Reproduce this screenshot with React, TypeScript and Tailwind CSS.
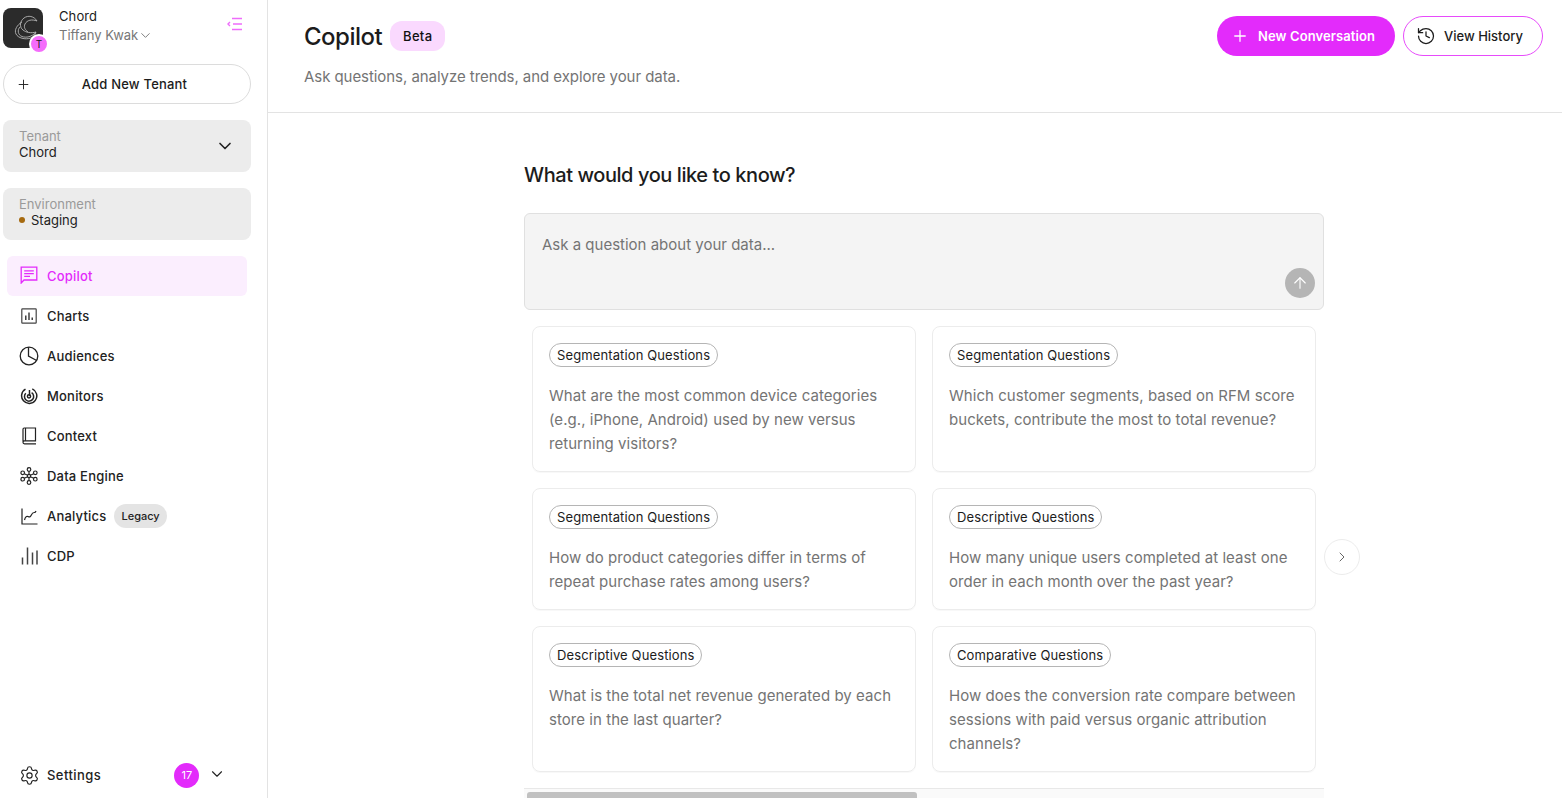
import React from 'react';
import { ChevronDown, ChevronRight, History, Plus, ArrowUp, Settings } from 'lucide-react';

function CopilotIcon() {
  return (
    <svg width="18" height="18" viewBox="0 0 18 18" fill="none" stroke="currentColor" strokeWidth="1.3" className="-mt-[2px]">
      <path d="M1.2 17V1.2h15.600v12.800H4L1.200 17z" />
      <path d="M4.200 4.800h9.600M4.200 7.600h9.600M4.200 10.400h5.800" />
    </svg>
  );
}

function ChartsIcon() {
  return (
    <svg width="16" height="16" viewBox="0 0 16 16" fill="none" stroke="currentColor" strokeWidth="1.2" className="-mt-[1px]">
      <rect x="0.8" y="0.8" width="14.4" height="14.400" rx="0.6" stroke="#444" />
      <path d="M4.800 12V7.500M8 12V4.500M11.200 12V9.500" strokeWidth="1.300" />
    </svg>
  );
}

function AudiencesIcon() {
  return (
    <svg width="20" height="20" viewBox="0 0 20 20" fill="none" stroke="currentColor" strokeWidth="1.3">
      <circle cx="10" cy="10" r="8.800" />
      <path d="M9.500 1.300V10l7.700 4.200" />
    </svg>
  );
}

function MonitorsIcon() {
  return (
    <svg width="18" height="18" viewBox="0 0 18 18" fill="none" stroke="currentColor" strokeWidth="1.500">
      <path d="M5.500 2.200a7.600 7.600 0 1 0 6.800-.3" />
      <path d="M5.800 6.300a4.600 4.600 0 1 0 5.800-.6" />
      <path d="M9.500 3v6" />
      <circle cx="9" cy="9.300" r="1.600" />
    </svg>
  );
}

function ContextIcon() {
  return (
    <svg width="15" height="18" viewBox="0 0 15 18" fill="none" stroke="currentColor" strokeWidth="1.200">
      <path d="M1 14.500V2.200C1 1.500 1.500 1 2.200 1H13.500v12.800H2.500C1.600 13.800 1 14.500 1 15.300S1.600 16.800 2.500 16.800H14" />
      <path d="M3.500 1v12.800" />
    </svg>
  );
}

function DataEngineIcon() {
  return (
    <svg width="18" height="18" viewBox="0 0 18 18" fill="none" stroke="currentColor" strokeWidth="1.200">
      <circle cx="9" cy="2.500" r="1.800" />
      <circle cx="9" cy="15.500" r="1.800" />
      <circle cx="2.700" cy="5.800" r="1.800" />
      <circle cx="15.300" cy="5.800" r="1.800" />
      <circle cx="2.700" cy="12.200" r="1.800" />
      <circle cx="15.300" cy="12.200" r="1.800" />
      <circle cx="9" cy="9" r="1.600" />
      <path d="M9 4.300v3.100M9 10.600v3.100M4.300 6.700l3.300 1.500M13.700 6.700l-3.300 1.500M4.300 11.300l3.300-1.500M13.700 11.300l-3.300-1.500" />
    </svg>
  );
}

function AnalyticsIcon() {
  return (
    <svg width="17" height="17" viewBox="0 0 17 17" fill="none" stroke="currentColor" strokeWidth="1.200">
      <path d="M1 0.500v15.500h15.500" />
      <path d="M3.500 12c.8-2.800 2-4.300 3.500-3.500s2.400.6 3.200-1.200 1.800-3 3.300-2.800c.7 0 1.100-.5 1.500-1.500" />
    </svg>
  );
}

function CdpIcon() {
  return (
    <svg width="17" height="18" viewBox="0 0 17 18" fill="none" stroke="#444" strokeWidth="1.500">
      <path d="M1.500 17.500v-7M6.500 17.500V0.500M11.500 17.500V5.500M16 17.500V3.500" />
    </svg>
  );
}

function CollapseIcon() {
  return (
    <svg width="16" height="14" viewBox="0 0 16 14" fill="none" stroke="#ee6cfb" strokeWidth="1.400" className="mb-[8px]">
      <path d="M5 1.500h10M6 7h9M5 12.500h10" />
      <path d="M3 5L1 7l2 2" />
    </svg>
  );
}

function ChordLogo() {
  return (
    <div className="relative w-10 h-10 shrink-0">
      <div className="w-10 h-10 rounded-lg bg-[#2b2b2b]">
        <svg width="40" height="40" viewBox="0 0 40 40" fill="none" stroke="#b4b4b4" strokeWidth="0.900">
          <path d="M34 13C31 8 25 7 21 10C17 13 16 19 20 22C23 24.500 28 25.500 33 24" />
          <path d="M34 13C29 11 24 12 22 16C20.500 19 22 22 25 24" />
          <path d="M19 14C14 17 11 22 13 26C15 30 22 32 28 30C30 29 32 27 33 24" />
          <path d="M17 19C14 22 15 27 19 28.500C23 30 29 29 33 24" />
        </svg>
      </div>
      <div className="absolute -right-[6px] -bottom-[6px] w-[20px] h-[20px] rounded-full bg-[#f46cfb] border-2 border-white flex items-center justify-center text-[10px] text-[#222]">
        T
      </div>
    </div>
  );
}

const navItems = [
  { label: 'Copilot', icon: <CopilotIcon />, active: true },
  { label: 'Charts', icon: <ChartsIcon /> },
  { label: 'Audiences', icon: <AudiencesIcon /> },
  { label: 'Monitors', icon: <MonitorsIcon /> },
  { label: 'Context', icon: <ContextIcon /> },
  { label: 'Data Engine', icon: <DataEngineIcon /> },
  { label: 'Analytics', icon: <AnalyticsIcon />, badge: 'Legacy' },
  { label: 'CDP', icon: <CdpIcon /> },
];

function Sidebar() {
  return (
    <aside className="w-[268px] shrink-0 h-full border-r border-[#e3e3e3] flex flex-col">
      <div className="flex items-center pl-[3px] pr-[24px] pt-[8px] h-[48px]">
        <ChordLogo />
        <div className="ml-[16px] mb-[4px] flex-1 leading-[19px]">
          <div className="text-[13px] text-[#1c1c1c] tracking-[0.1px]">Chord</div>
          <div className="flex items-center text-[13px] text-[#777]">
            Tiffany Kwak
            <ChevronDown size={15} strokeWidth={1.500} />
          </div>
        </div>
        <CollapseIcon />
      </div>

      <div className="mx-[3px] w-[248px] mt-[16px] h-[40px] rounded-full border border-[#dcdcdc] flex items-center relative">
        <Plus size={15} className="ml-[12px] text-[#222]" strokeWidth={1.500} />
        <span className="flex-1 text-center text-[13px] font-medium text-[#1c1c1c] pr-[18px] pl-[6px] pt-[2px] tracking-[0.2px]">Add New Tenant</span>
      </div>

      <div className="mx-[3px] w-[248px] mt-[16px] h-[52px] rounded-lg bg-[#ececec] flex items-center pl-[16px] pr-[16px]">
        <div className="flex-1 text-[13px] leading-[16px] pb-[4px]">
          <div className="text-[#9a9a9a]">Tenant</div>
          <div className="text-[#222]">Chord</div>
        </div>
        <ChevronDown size={20} className="text-[#222]" strokeWidth={2} />
      </div>

      <div className="mx-[3px] w-[248px] mt-[16px] h-[52px] rounded-lg bg-[#ececec] flex items-center pl-[16px]">
        <div className="text-[13px] leading-[16px] pb-[4px]">
          <div className="text-[#9a9a9a]">Environment</div>
          <div className="flex items-center text-[#222]">
            <span className="w-[6px] h-[6px] rounded-full bg-[#a66a10] mr-[6px]" />
            Staging
          </div>
        </div>
      </div>

      <nav className="mt-[16px] ml-[7px] w-[240px] flex flex-col">
        {navItems.map((item) => (
          <div
            key={item.label}
            className={
              item.active
                ? 'h-[40px] rounded-md bg-[#fbeefe] text-[#e32bfb] flex items-center'
                : 'h-[40px] text-[#222] flex items-center'
            }
          >
            <span className="w-[40px] pl-[12px] flex justify-start items-center">
              <span className="w-[20px] flex justify-center">{item.icon}</span>
            </span>
            <span className="text-[13px] font-medium tracking-[0.2px] pt-[2px]">{item.label}</span>
            {item.badge && (
              <span className="ml-[8px] h-[24px] px-[7px] rounded-full bg-[#e4e4e4] text-[11px] font-medium flex items-center">
                {item.badge}
              </span>
            )}
          </div>
        ))}
      </nav>

      <div className="mt-auto h-[46px] ml-[19px] flex items-center text-[#222]">
        <Settings size={21} strokeWidth={1.300} />
        <span className="ml-[7px] pt-[2px] text-[13px] font-medium tracking-[0.45px]">Settings</span>
        <span className="ml-[73px] w-[25px] h-[25px] rounded-full bg-[#e32bfb] text-white text-[11px] flex items-center justify-center">17</span>
        <ChevronDown size={18} className="ml-[9px] mb-[2px]" strokeWidth={1.500} />
      </div>
    </aside>
  );
}

const cards = [
  [
    { tag: 'Segmentation Questions', text: 'What are the most common device categories (e.g., iPhone, Android) used by new versus returning visitors?' },
    { tag: 'Segmentation Questions', text: 'Which customer segments, based on RFM score buckets, contribute the most to total revenue?' },
  ],
  [
    { tag: 'Segmentation Questions', text: 'How do product categories differ in terms of repeat purchase rates among users?' },
    { tag: 'Descriptive Questions', text: 'How many unique users completed at least one order in each month over the past year?' },
  ],
  [
    { tag: 'Descriptive Questions', text: 'What is the total net revenue generated by each store in the last quarter?' },
    { tag: 'Comparative Questions', text: 'How does the conversion rate compare between sessions with paid versus organic attribution channels?' },
  ],
];

function QuestionCard({ tag, text }: { tag: string; text: string }) {
  return (
    <div className="rounded-lg border border-[#ececec] pt-[16px] pb-[15px] px-[16px] shadow-[0_1px_1px_rgba(0,0,0,0.03)]">
      <span className="flex w-fit items-center h-[24px] pt-[1px] px-[7px] rounded-full border border-[#b5b5b5] text-[13px] tracking-[0.12px] text-[#1c1c1c]">
        {tag}
      </span>
      <p className="mt-[17px] text-[15px] leading-[24px] tracking-[0.05px] text-[#747474]">{text}</p>
    </div>
  );
}

export default function App() {
  return (
    <div className="w-[1562px] h-[798px] overflow-hidden flex bg-white font-['Inter',sans-serif]">
      <Sidebar />
      <main className="flex-1 flex flex-col min-w-0">
        <header className="h-[113px] border-b border-[#e3e3e3] shrink-0 pl-[36px] pr-[19px] flex justify-between">
          <div>
            <div className="flex items-center mt-[21px] h-[30px]">
              <h1 className="text-[24px] font-medium text-[#1c1c1c] tracking-[-0.5px] pt-[2px]">Copilot</h1>
              <span className="ml-[8px] w-[55px] h-[30px] pt-[2px] rounded-[12px] bg-[#fad9fe] text-[13px] tracking-[0.3px] font-medium text-[#111] flex items-center justify-center">Beta</span>
            </div>
            <p className="mt-[16px] text-[15px] leading-[20px] tracking-[-0.06px] text-[#747474]">Ask questions, analyze trends, and explore your data.</p>
          </div>
          <div className="flex gap-[8px] mt-[16px]">
            <button className="w-[178px] h-[40px] rounded-full bg-[#e32bfb] text-white text-[13px] font-semibold flex items-center pl-[14px]">
              <Plus size={18} strokeWidth={1.700} />
              <span className="ml-[9px] pt-[2px] tracking-[0.1px]">New Conversation</span>
            </button>
            <button className="w-[140px] h-[40px] rounded-full border border-[#e74bfb] text-[#1c1c1c] text-[13px] font-medium flex items-center pl-[12px]">
              <History size={20} strokeWidth={1.500} />
              <span className="ml-[8px] pt-[2px]">View History</span>
            </button>
          </div>
        </header>

        <div className="pl-[256px] w-[1092px]">
          <h2 className="mt-[50px] h-[24px] text-[20px] leading-[24px] font-medium tracking-[-0.43px] text-[#1c1c1c]">What would you like to know?</h2>
          <div className="relative mt-[26px] w-[800px] h-[97px] rounded-md border border-[#e0e0e0] bg-[#f4f4f4] pl-[17px] pt-[21px] text-[15px] leading-[20px] text-[#747474]">
            Ask a question about your data...
            <span className="absolute right-[8px] bottom-[11px] w-[30px] h-[30px] rounded-full bg-[#b5b5b5] text-white flex items-center justify-center">
              <ArrowUp size={18} strokeWidth={1.500} />
            </span>
          </div>

          <div className="relative w-[800px] mt-[16px] px-[8px] flex flex-col gap-[16px]">
            <div className="grid grid-cols-2 gap-[16px] h-[146px]">
              {cards[0].map((c) => <QuestionCard key={c.text} {...c} />)}
            </div>
            <div className="grid grid-cols-2 gap-[16px] h-[122px]">
              {cards[1].map((c) => <QuestionCard key={c.text} {...c} />)}
            </div>
            <div className="grid grid-cols-2 gap-[16px] h-[146px]">
              {cards[2].map((c) => <QuestionCard key={c.text} {...c} />)}
            </div>
            <span className="absolute -right-[36px] top-[213px] w-[36px] h-[36px] rounded-full border border-[#ececec] bg-white flex items-center justify-center text-[#666]">
              <ChevronRight size={16} strokeWidth={1.500} />
            </span>
          </div>

          <div className="mt-[16px] w-[800px] h-[10px] bg-[#fafafa] border-t border-[#e8e8e8] px-[3px] pt-[3px]">
            <div className="w-[390px] h-[8px] rounded-t-[3px] bg-[#c1c1c1]" />
          </div>
        </div>
      </main>
    </div>
  );
}
